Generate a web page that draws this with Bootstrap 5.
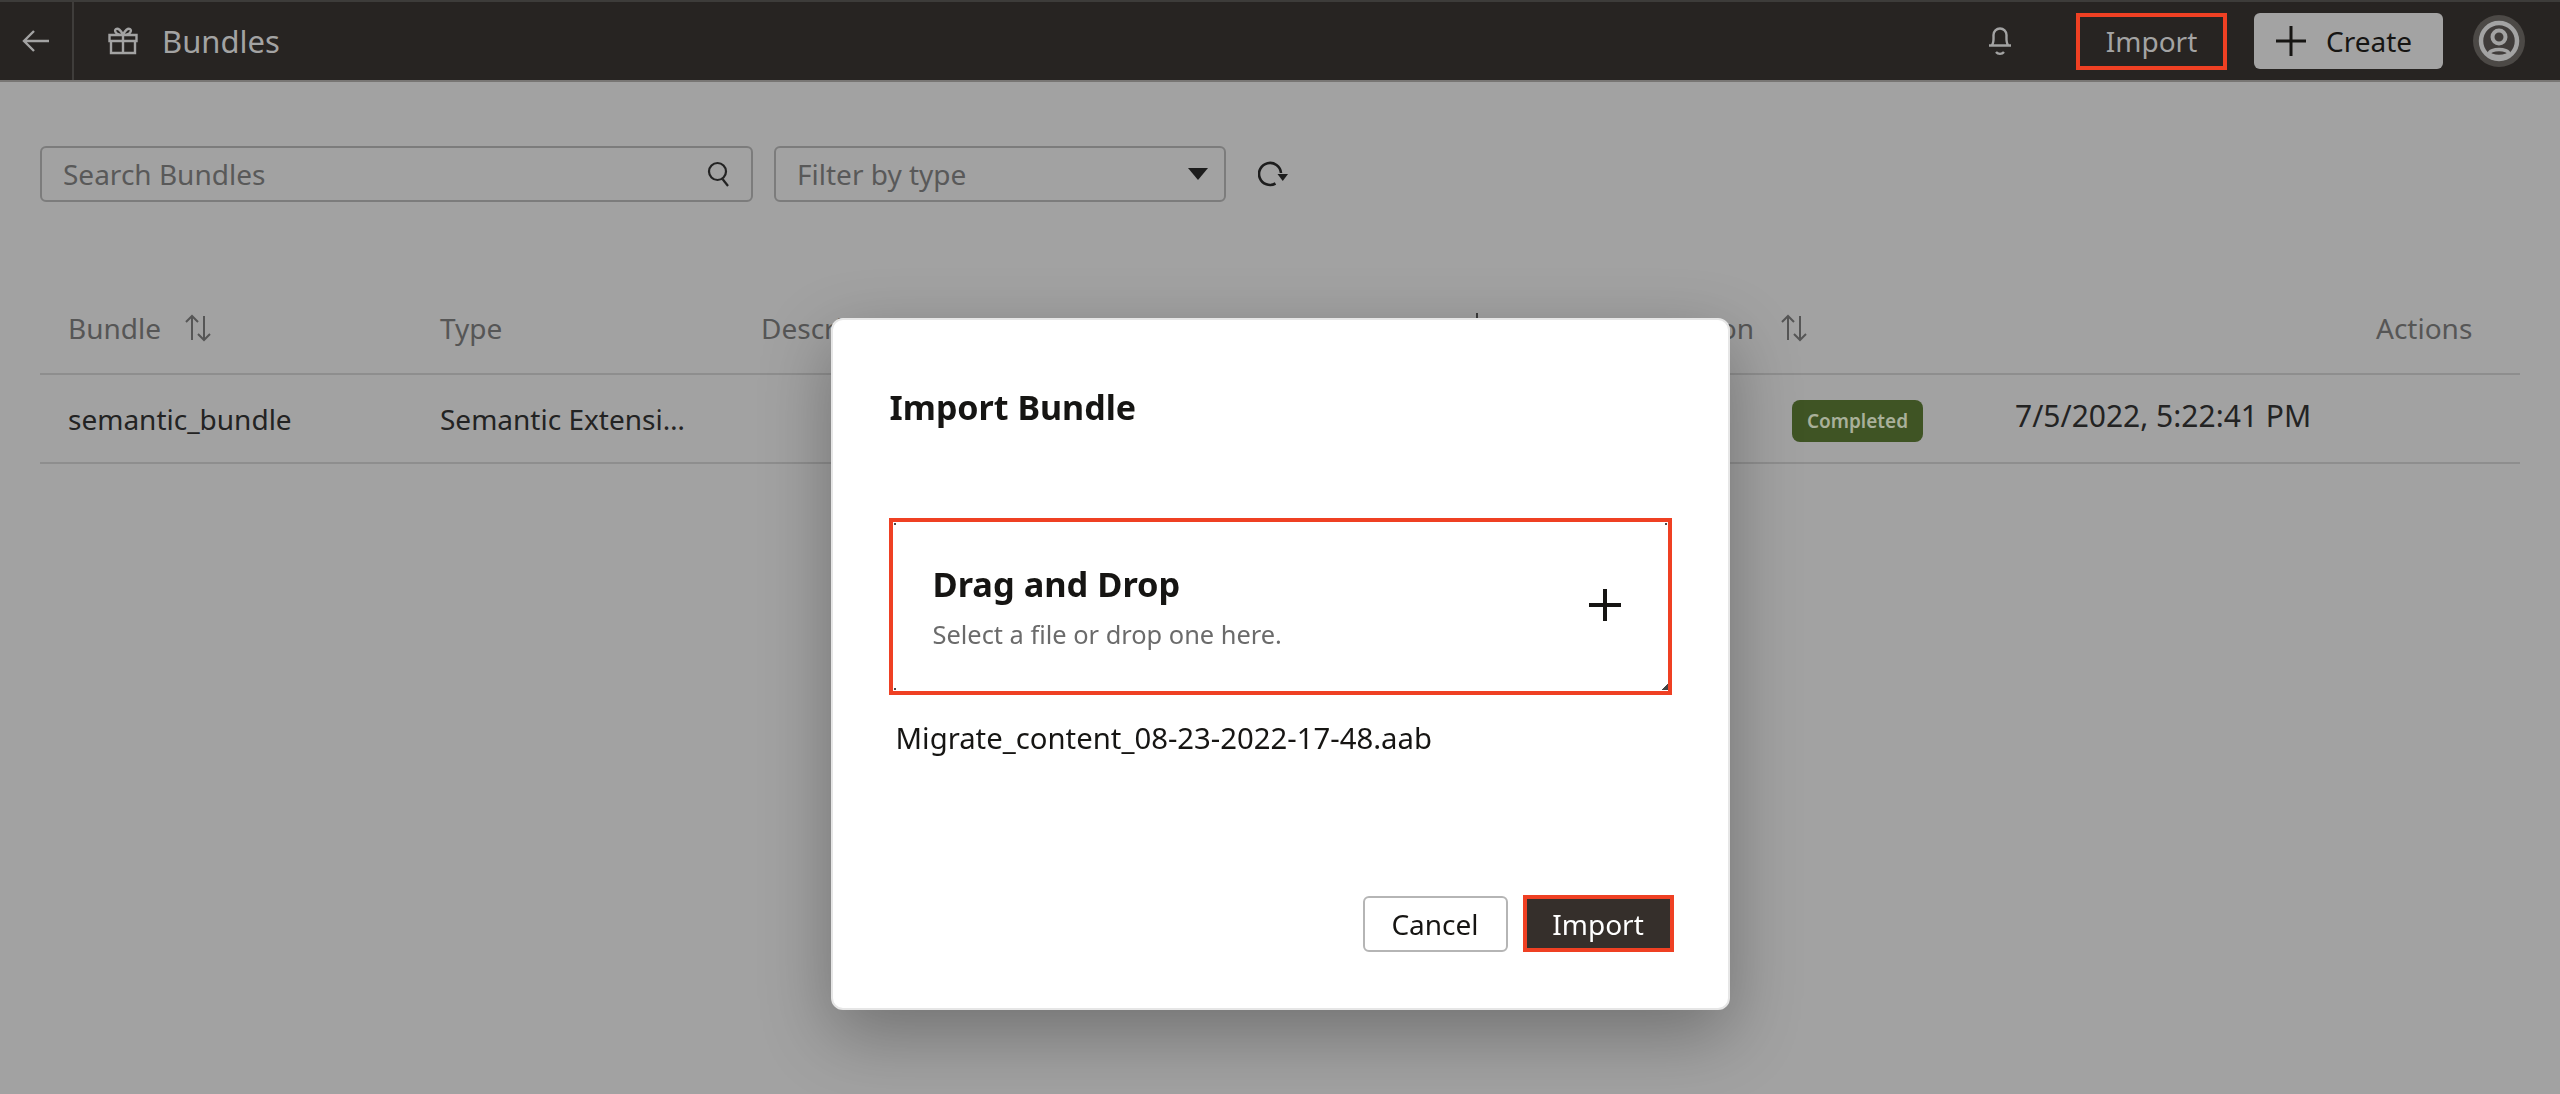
<!DOCTYPE html>
<html lang="en">
<head>
<meta charset="utf-8">
<title>Bundles</title>
<link href="https://cdn.jsdelivr.net/npm/bootstrap@5.3.0/dist/css/bootstrap.min.css" rel="stylesheet">
<style>
html,body{height:100%;overflow:hidden}
body{background:#a2a2a2;font-family:"Noto Sans","Open Sans",sans-serif;color:#232323}
.app-bar{height:82px;background:#272422;border-top:2px solid #3d3c3a;border-bottom:2px solid #787674;padding:0;flex-wrap:nowrap;color:#a3a3a3}
.back-cell{width:74px;height:100%;border-right:2px solid #3f3d3b;justify-content:center}
.app-title{font-size:31px;line-height:1;color:#a3a3a3;margin-left:24px}
.gift{margin-left:34px}
.bar-right{margin-left:auto;padding-right:35px}
.notice-ic{margin-right:64px}
.btn.imp-top{width:151px;height:57px;border:4px solid #ef4023;border-radius:0;background:transparent;color:#a3a3a3;font-size:28px;padding:0;line-height:1;margin-right:27px}
.btn.create-btn{width:189px;height:56px;background:#a3a3a3;border:0;border-radius:6px;color:#161513;font-size:28px;padding:0 0 0 22px;line-height:1;gap:20px;margin-right:30px;justify-content:flex-start}
.tools{padding:64px 40px 0;gap:21px}
.field-box{height:56px;border:2px solid #7c7c7c;border-radius:6px;background:transparent;padding:0 20px 0 21px;font-size:28px;color:#595959}
.field-search{width:713px}
.field-filter{width:452px;padding-right:16px}
.refresh-ic{margin-left:11px}
.table-wrap{padding:83px 40px 0}
.table.bundle-table{table-layout:fixed;width:2480px;--bs-table-bg:transparent;--bs-table-color:#232323;margin:0;font-size:28px}
.bundle-table th,.bundle-table td{border-bottom:2px solid #8e8e8e;padding:0 0 0 28px;vertical-align:middle;white-space:nowrap;font-weight:400}
.bundle-table th{height:89px;color:#565656;position:relative;padding-bottom:2px}
.bundle-table td{height:89px}
.c1{width:372px}.c2{width:321px}.c3{width:715px}.c4{width:316px}.c5{width:223px}.c6{width:361px}.c7{width:172px}
.bundle-table th.op-head{text-align:right;padding:0 10px 2px 0}
.bundle-table th.sort-head{padding-left:17px}
.sort-ic{margin-left:24px;vertical-align:-3px}
.sort-head .sort-ic{margin-left:0}
.cut-cell{overflow:hidden;text-overflow:ellipsis;padding-right:34px !important}
.op-tick{position:absolute;left:28px;top:28px;width:2px;height:6px;background:#3a3a3a}
.badge.done-badge{background:#3f5424;color:#a9b09a;border-radius:8px;width:131px;height:42px;font-size:19px;font-weight:600;padding:0;line-height:42px}
.date-cell{position:relative;top:-3px;font-size:30px}
.modal.imp-modal{display:block}
.modal-dialog.imp-dialog{max-width:none;width:899px;margin:318px auto 0}
.imp-content{height:692px;border:2px solid #e6e6e6;border-radius:12px;background:#fff;box-shadow:0 24px 70px rgba(0,0,0,.3);color:#161513}
.imp-head{padding:0 56px;height:198px;border:0;align-items:flex-start}
.imp-title{font-size:34px;font-weight:700;margin:65px 0 0 1px;line-height:1.3;color:#161513}
.imp-body{padding:0 56px;flex:0 0 auto}
.drop-area{height:177px;border:4px solid #ef4023;padding:0 47px 0 40px;position:relative}
.drop-txt{margin-top:2px}
.plus-ic{margin-bottom:3px}
.drop-h{font-size:34.4px;font-weight:700;line-height:1.2;color:#161513;margin:-2px 0 15px}
.drop-s{font-size:25.4px;line-height:1.2;color:#6b6b6b}
.corner{position:absolute;width:2px;height:2px;background:#4a4a4a}
.corner.tl{left:1px;top:1px}.corner.tr{right:1px;top:1px}.corner.bl{left:1px;bottom:1px}.corner.br{right:0;bottom:1px;width:6px;height:6px;background:linear-gradient(135deg,transparent 50%,#444 50%)}
.file-name{font-size:29.3px;line-height:1.2;margin:26px 0 0 7px;color:#161513}
.imp-foot{padding:0 54px 0 0;border:0;margin-top:auto;margin-bottom:56px;gap:15px;justify-content:flex-end}
.imp-foot>*{margin:0}
.btn.cancel-btn{width:145px;height:56px;border:2px solid #b5b5b5;border-radius:6px;background:#fff;color:#161513;font-size:28px;padding:0;line-height:1}
.btn.import-btn{width:151px;height:57px;border:4px solid #ef4023;border-radius:0;background:#352f2b;color:#fff;font-size:28px;padding:0;line-height:1}
</style>
</head>
<body>
<nav class="navbar app-bar d-flex align-items-center">
  <div class="back-cell d-flex align-items-center">
    <svg width="30" height="24" viewBox="0 0 30 24" fill="none" stroke="#a3a3a3" stroke-width="2.4"><path d="M28 12H3M13 2 3 12l10 10"/></svg>
  </div>
  <svg class="gift" width="30" height="28" viewBox="0 0 30 28" fill="none" stroke="#a3a3a3" stroke-width="2.4"><path d="M3 14h24v12H3zM1.500 8h27v6h-27zM15 8v18M15 8c-2-5-5-7-7-6s-1 6 7 6zM15 8c2-5 5-7 7-6s1 6-7 6z"/></svg>
  <span class="app-title">Bundles</span>
  <div class="bar-right d-flex align-items-center">
    <svg class="notice-ic" width="24" height="32" viewBox="0 0 24 32" fill="none" stroke="#a3a3a3" stroke-width="2.4"><path d="M4 20c2-2.500 1.500-5.500 1.500-10a6.500 6.500 0 0 1 13 0c0 4.500-.5 7.500 1.500 10M1 20.500h22M8 27c2 2.500 6 2.500 8 0"/></svg>
    <button class="btn imp-top" type="button">Import</button>
    <button class="btn create-btn d-flex align-items-center" type="button">
      <svg width="30" height="30" viewBox="0 0 30 30" stroke="#161513" stroke-width="3"><path d="M15 0v30M0 15h30"/></svg>Create
    </button>
    <svg width="52" height="52" viewBox="0 0 52 52" fill="none"><circle cx="26" cy="26" r="26" fill="#4c4946"/><circle cx="26" cy="26" r="18" stroke="#a3a3a3" stroke-width="4.500" fill="#403c3a"/><circle cx="26" cy="22" r="6.500" stroke="#a3a3a3" stroke-width="4"/><ellipse cx="26" cy="38" rx="9.500" ry="3.500" stroke="#a3a3a3" stroke-width="3.500"/></svg>
  </div>
</nav>

<main>
  <div class="tools d-flex align-items-center">
    <div class="field-box field-search d-flex align-items-center justify-content-between">
      <span>Search Bundles</span>
      <svg width="24" height="26" viewBox="0 0 24 26" fill="none" stroke="#232323" stroke-width="2.200"><circle cx="10.500" cy="10.500" r="8.500"/><path d="m15.500 18 5.500 7"/></svg>
    </div>
    <div class="field-box field-filter d-flex align-items-center justify-content-between">
      <span>Filter by type</span>
      <svg width="20" height="12" viewBox="0 0 20 12" fill="#1d1d1d"><path d="M0 0h20L10 12z"/></svg>
    </div>
    <svg class="refresh-ic" width="30" height="28" viewBox="0 0 30 28" fill="none" stroke="#1d1d1d" stroke-width="2.600"><path d="M17.500 23.500A11 11 0 1 1 23 13"/><path d="M19.500 14H30l-5.250 7z" fill="#1d1d1d" stroke="none"/></svg>
  </div>

  <div class="table-wrap">
    <table class="table bundle-table">
      <colgroup><col class="c1"><col class="c2"><col class="c3"><col class="c4"><col class="c5"><col class="c6"><col class="c7"></colgroup>
      <thead>
        <tr>
          <th>Bundle<svg class="sort-ic" width="26" height="28" viewBox="0 0 26 28" fill="none" stroke="#565656" stroke-width="2"><path d="M7 26V2M1 8l6-6 6 6M19 2v24M13 20l6 6 6-6"/></svg></th>
          <th>Type</th>
          <th>Description</th>
          <th class="op-head"><span class="op-tick"></span>Last Operation</th>
          <th class="sort-head"><svg class="sort-ic" width="26" height="28" viewBox="0 0 26 28" fill="none" stroke="#565656" stroke-width="2"><path d="M7 26V2M1 8l6-6 6 6M19 2v24M13 20l6 6 6-6"/></svg></th>
          <th></th>
          <th>Actions</th>
        </tr>
      </thead>
      <tbody>
        <tr>
          <td>semantic_bundle</td>
          <td class="cut-cell">Semantic Extensions</td>
          <td></td>
          <td></td>
          <td><span class="badge done-badge">Completed</span></td>
          <td><span class="date-cell">7/5/2022, 5:22:41 PM</span></td>
          <td></td>
        </tr>
      </tbody>
    </table>
  </div>
</main>

<div class="modal imp-modal" role="dialog" aria-modal="true">
  <div class="modal-dialog imp-dialog">
    <div class="modal-content imp-content">
      <div class="modal-header imp-head">
        <h2 class="imp-title">Import Bundle</h2>
      </div>
      <div class="modal-body imp-body">
        <div class="drop-area d-flex align-items-center justify-content-between">
          <i class="corner tl"></i><i class="corner tr"></i><i class="corner bl"></i><i class="corner br"></i>
          <div class="drop-txt">
            <div class="drop-h">Drag and Drop</div>
            <div class="drop-s">Select a file or drop one here.</div>
          </div>
          <svg class="plus-ic" width="32" height="32" viewBox="0 0 32 32" stroke="#161513" stroke-width="4"><path d="M16 0v32M0 16h32"/></svg>
        </div>
        <div class="file-name">Migrate_content_08-23-2022-17-48.aab</div>
      </div>
      <div class="modal-footer imp-foot">
        <button class="btn cancel-btn" type="button">Cancel</button>
        <button class="btn import-btn" type="button">Import</button>
      </div>
    </div>
  </div>
</div>
<script src="https://cdn.jsdelivr.net/npm/bootstrap@5.3.0/dist/js/bootstrap.bundle.min.js"></script>
</body>
</html>
